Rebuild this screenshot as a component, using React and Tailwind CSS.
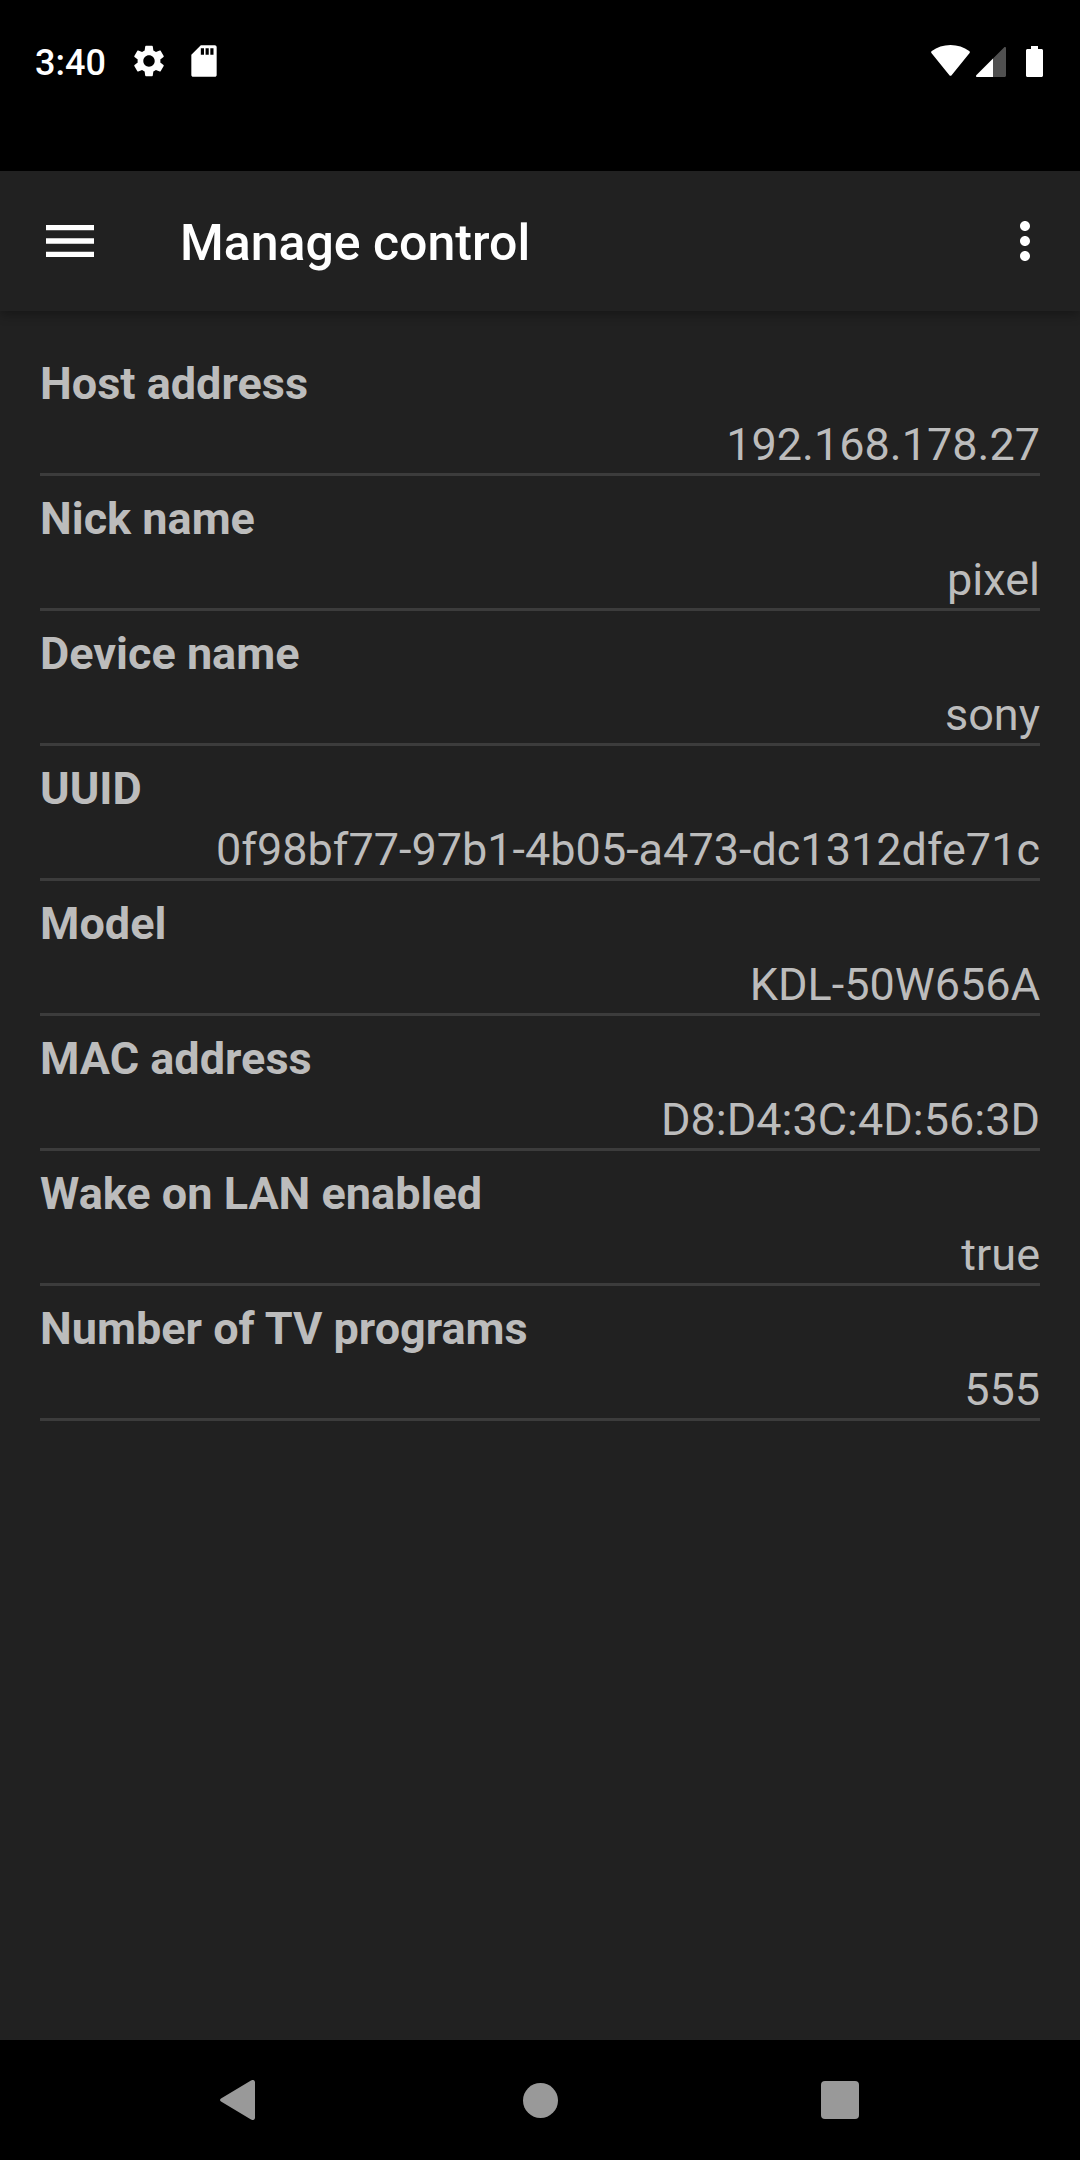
const details = [
  { label: 'Host address', value: '192.168.178.27' },
  { label: 'Nick name', value: 'pixel' },
  { label: 'Device name', value: 'sony' },
  { label: 'UUID', value: '0f98bf77-97b1-4b05-a473-dc1312dfe71c' },
  { label: 'Model', value: 'KDL-50W656A' },
  { label: 'MAC address', value: 'D8:D4:3C:4D:56:3D' },
  { label: 'Wake on LAN enabled', value: 'true' },
  { label: 'Number of TV programs', value: '555' },
];

function StatusBar() {
  return (
    <div className="flex h-[171px] items-start justify-between bg-black pt-[41px] pr-[37px] pl-[35px] text-white">
      <div className="flex h-10 items-center">
        <span className="pt-1 text-[36px] leading-10 font-medium">3:40</span>
        <svg className="ml-6 size-[38px]" viewBox="0 0 24 24" fill="currentColor" aria-hidden="true">
          <path d="M19.14 12.94c.04-.3.06-.61.06-.94 0-.32-.02-.64-.07-.94l2.03-1.58c.18-.14.23-.41.12-.61l-1.92-3.32c-.12-.22-.37-.29-.59-.22l-2.39.96c-.5-.38-1.03-.7-1.62-.94l-.36-2.54c-.04-.24-.24-.41-.48-.41h-3.84c-.24 0-.43.17-.47.41l-.36 2.54c-.59.24-1.13.57-1.62.94l-2.39-.96c-.22-.08-.47 0-.59.22L2.74 8.87c-.12.21-.08.47.12.61l2.03 1.58c-.05.3-.09.63-.09.94s.02.64.07.94l-2.03 1.58c-.18.14-.23.41-.12.61l1.92 3.32c.12.22.37.29.59.22l2.39-.96c.5.38 1.03.7 1.62.94l.36 2.54c.05.24.24.41.48.41h3.84c.24 0 .44-.17.47-.41l.36-2.54c.59-.24 1.13-.56 1.62-.94l2.39.96c.22.08.47 0 .59-.22l1.92-3.32c.12-.22.07-.47-.12-.61l-2.01-1.58zM12 15.6c-1.98 0-3.6-1.62-3.6-3.6s1.62-3.6 3.6-3.6 3.6 1.62 3.6 3.6-1.62 3.6-3.6 3.6z" />
        </svg>
        <svg className="ml-[17px] size-[38px]" viewBox="0 0 24 24" fill="currentColor" aria-hidden="true">
          <path d="M18.8 2H10L4 8v12.8c0 .7.5 1.2 1.2 1.2h13.6c.7 0 1.2-.5 1.2-1.2V3.200c0-.7-.5-1.200-1.200-1.200zM12 8h-2V4h2v4zm3 0h-2V4h2v4zm3 0h-2V4h2v4z" />
        </svg>
      </div>
      <div className="flex h-10 items-center">
        <svg className="h-8 w-[39px]" viewBox="0 0 39 32" fill="currentColor" aria-hidden="true">
          <path d="M.6 8.300C-.1 7.500 0 6.500.8 5.900 6 2.200 12.500 0 19.500 0s13.500 2.200 18.700 5.900c.8.6.9 1.600.2 2.400L20.600 30.200c-.6.8-1.600.8-2.200 0z" />
        </svg>
        <svg className="ml-1.5 h-8 w-[30px]" viewBox="0 0 30 32" aria-hidden="true">
          <path d="M17 13.500 28 2.500c.9-.9 2-.5 2 .7V30.500c0 .9-.6 1.500-1.500 1.500H17z" fill="#505050" />
          <path d="M17 13.500V32H1.200C0 32-.4 30.800.5 29.900z" fill="currentColor" />
        </svg>
        <svg className="ml-5 h-8 w-[17px]" viewBox="0 0 17 32" fill="currentColor" aria-hidden="true">
          <path d="M5 1h7v3h3.500c.8 0 1.500.7 1.500 1.500v25c0 .8-.7 1.500-1.500 1.500h-14C.7 32 0 31.300 0 30.500v-25C0 4.700.7 4 1.500 4H5z" />
        </svg>
      </div>
    </div>
  );
}

function AppBar() {
  return (
    <header className="relative flex h-[140px] items-center bg-[#212121] pr-[25px] pl-[38px] text-white shadow-[0_4px_10px_rgba(0,0,0,0.3)]">
      <button type="button" aria-label="Open menu" className="size-16">
        <svg className="size-16" viewBox="0 0 24 24" fill="currentColor" aria-hidden="true">
          <path d="M3 18h18v-2H3v2zm0-5h18v-2H3v2zm0-7v2h18V6H3z" />
        </svg>
      </button>
      <h1 className="ml-[78px] flex-1 pt-1 text-[50px] leading-[60px] font-medium">Manage control</h1>
      <button type="button" aria-label="More options" className="size-[60px]">
        <svg className="size-[60px]" viewBox="0 0 24 24" fill="currentColor" aria-hidden="true">
          <path d="M12 8c1.100 0 2-.9 2-2s-.9-2-2-2-2 .9-2 2 .9 2 2 2zm0 2c-1.100 0-2 .9-2 2s.9 2 2 2 2-.9 2-2-.9-2-2-2zm0 6c-1.100 0-2 .9-2 2s.9 2 2 2 2-.9 2-2-.9-2-2-2z" />
        </svg>
      </button>
    </header>
  );
}

function DetailRow({ label, value }) {
  return (
    <div className="flex flex-col gap-[5px] border-b-3 border-[#3c3c3c] pt-[15px] text-[45px] leading-[56px] text-[#bcbcbc]">
      <dt className="font-bold">{label}</dt>
      <dd className="text-right">{value}</dd>
    </div>
  );
}

function NavigationBar() {
  return (
    <nav aria-label="System" className="flex h-[120px] justify-center bg-black text-[#999999]">
      <button type="button" aria-label="Back" className="flex w-[300px] items-center justify-center">
        <svg className="size-10" viewBox="0 0 40 40" fill="currentColor" aria-hidden="true">
          <path d="M31 .5c2-1.200 4-.3 4 2v35c0 2.300-2 3.200-4 2L1 21.500c-1.300-.8-1.300-2.200 0-3z" />
        </svg>
      </button>
      <button type="button" aria-label="Home" className="flex w-[300px] items-center justify-center">
        <span className="size-[35px] rounded-full bg-[#999999]" />
      </button>
      <button type="button" aria-label="Recent apps" className="flex w-[300px] items-center justify-center">
        <span className="size-[38px] rounded bg-[#999999]" />
      </button>
    </nav>
  );
}

export default function App() {
  return (
    <div className="flex min-h-screen flex-col bg-[#212121] font-['Roboto',sans-serif]">
      <StatusBar />
      <AppBar />
      <main className="flex-1 px-10 pt-[30px]">
        <dl>
          {details.map((item) => (
            <DetailRow key={item.label} label={item.label} value={item.value} />
          ))}
        </dl>
      </main>
      <NavigationBar />
    </div>
  );
}
